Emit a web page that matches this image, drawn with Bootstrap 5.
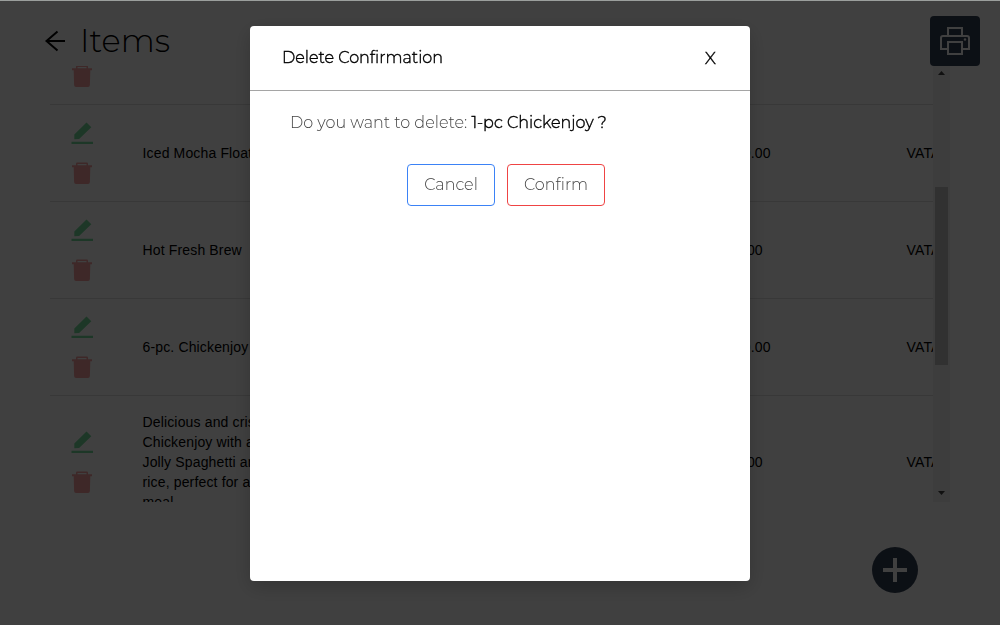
<!DOCTYPE html>
<html lang="en">
<head>
<meta charset="utf-8">
<meta name="viewport" content="width=device-width, initial-scale=1">
<title>Items</title>
<link href="https://cdn.jsdelivr.net/npm/bootstrap@5.3.0/dist/css/bootstrap.min.css" rel="stylesheet">
<style>
  html, body { height: 100%; overflow: hidden; }
  body { font-family: Montserrat, Inter, "Open Sans", sans-serif; color: #000; background: #fff; }
  .page-head { height: 66px; padding: 16px 20px 0 42px; }
  .page-title { font-size: 32px; font-weight: 300; line-height: 50px; margin: 0 0 0 12px; }
  .back-arrow { width: 26px; height: 50px; }
  .print-btn { width: 50px; height: 50px; background: #334155; border-radius: 4px; }
  .item-table { height: 436px; margin: 0 50px; }
  .item-rows { font: 14px/20px "Liberation Sans", Arial, sans-serif; letter-spacing: .15px; }
  .item-row { height: 97px; border-bottom: 1px solid #e0e0e0; padding-left: 20px; }
  .item-row.first-row { height: 39px; }
  .item-row.tall-row { height: 133px; }
  .cell-actions { width: 72.5px; gap: 16px; }
  .cell-actions:not(.first-cell) { margin-top: -2px; }
  .cell-actions svg { width: 24px; height: 24px; opacity: .5; display: block; }
  .cell-actions svg.pen-icon { opacity: .62; }
  .first-cell svg { margin-top: -3px; }
  .cell-name { width: 140px; }
  .cell-price { width: 179.5px; margin-left: 444.5px; }
  .sb-track { width: 17px; background: #f1f1f1; padding: 5px 0 7px; }
  .sb-thumb { width: 13px; height: 178px; margin-top: 112px; background: #c1c1c1; }
  .sb-arrow { width: 7px; height: 4px; display: block; }
  .add-btn { width: 46px; height: 46px; background: #334155; margin: 45px 82px 0 auto; }
  .shade { background: rgba(0,0,0,.75); border-top: 1px solid #9b9f9d; z-index: 1055; padding-top: 25px; }
  .dialog-box { width: 500px; height: 555px; border-radius: 4px; box-shadow: 0 6px 20px rgba(0,0,0,.2); }
  .dialog-head { height: 65px; border-bottom: 1px solid #a5a5a5; padding: 0 34px 0 32px; }
  .dialog-title { font-size: 16px; font-weight: 300; line-height: 24px; margin: 0; }
  .close-x { font-size: 17.5px; line-height: 24px; font-weight: 300; }
  .dialog-title, .close-x, .dialog-text b { -webkit-text-stroke: .4px #000; }
  .dialog-text { font-size: 16px; font-weight: 300; line-height: 24px; margin: 20px 0 29px 40px; color: #444; }
  .dialog-text b { font-weight: 300; color: #000; }
  .dlg-btn { height: 42px; padding: 0; border: 1px solid; border-radius: 4px; font-size: 16px; font-weight: 300; color: #444; background: #fff; }
  .dlg-cancel { width: 88px; border-color: #3b82f6; }
  .dlg-confirm { width: 98px; border-color: #ef4444; }
  .dlg-actions { gap: 12px; padding-left: 12px; }
</style>
</head>
<body>
<svg class="d-none">
  <symbol id="pen" viewBox="0 0 24 24"><path fill="#22c55e" d="M4.300 14.600 16.500 2.400 21.300 7.200 9.100 18.900 4.300 19.300zM1.500 21.800h21.500v2.200H1.500z"/></symbol>
  <symbol id="bin" viewBox="0 0 24 24"><path fill="#ef4444" fill-rule="evenodd" d="M6 5.300V3.700Q6 2.500 7.200 2.500H16.800Q18 2.500 18 3.700V5.300H22V7.300H20.300L19.900 21.900Q19.800 23.900 18 23.900H6Q4.200 23.900 4.100 21.900L3.700 7.300H2V5.300zM7.500 4V5.300H16.500V4z"/></symbol>
</svg>

<header class="page-head d-flex align-items-start">
  <svg class="back-arrow" viewBox="0 0 26 50" fill="none" stroke="#000" stroke-width="2"><path d="M23 25H4.500M15.500 15.500 4.500 25 15.500 34.500"/></svg>
  <h1 class="page-title">Items</h1>
  <button class="print-btn btn p-0 border-0 ms-auto d-flex align-items-center justify-content-center" aria-label="Print">
    <svg width="32" height="32" viewBox="0 0 32 32" fill="none" stroke="#fff" stroke-width="2"><path d="M9 10V3H23V10M9 24H2V13Q2 11 4 11H28Q30 11 30 13V24H23M9 17H23V29H9z"/><circle cx="26" cy="14.500" r="1.200" fill="#fff" stroke="none"/></svg>
  </button>
</header>

<main>
  <div class="item-table d-flex overflow-hidden">
    <div class="item-rows flex-grow-1 overflow-hidden">
      <div class="item-row first-row d-flex">
        <div class="cell-actions first-cell"><svg><use href="#bin"/></svg></div>
      </div>
      <div class="item-row d-flex align-items-center">
        <div class="cell-actions d-flex flex-column flex-shrink-0"><svg class="pen-icon"><use href="#pen"/></svg><svg><use href="#bin"/></svg></div>
        <div class="cell-name flex-shrink-0">Iced Mocha Float</div><div class="cell-price flex-shrink-0">109.00</div><div>VATABLE</div>
      </div>
      <div class="item-row d-flex align-items-center">
        <div class="cell-actions d-flex flex-column flex-shrink-0"><svg class="pen-icon"><use href="#pen"/></svg><svg><use href="#bin"/></svg></div>
        <div class="cell-name flex-shrink-0">Hot Fresh Brew</div><div class="cell-price flex-shrink-0">59.00</div><div>VATABLE</div>
      </div>
      <div class="item-row d-flex align-items-center">
        <div class="cell-actions d-flex flex-column flex-shrink-0"><svg class="pen-icon"><use href="#pen"/></svg><svg><use href="#bin"/></svg></div>
        <div class="cell-name flex-shrink-0">6-pc. Chickenjoy</div><div class="cell-price flex-shrink-0">449.00</div><div>VATABLE</div>
      </div>
      <div class="item-row tall-row d-flex align-items-center">
        <div class="cell-actions d-flex flex-column flex-shrink-0"><svg class="pen-icon"><use href="#pen"/></svg><svg><use href="#bin"/></svg></div>
        <div class="cell-name flex-shrink-0">Delicious and crispy<br>Chickenjoy with a<br>Jolly Spaghetti and<br>rice, perfect for a<br>meal</div><div class="cell-price flex-shrink-0">99.00</div><div>VATABLE</div>
      </div>
    </div>
    <div class="sb-track d-flex flex-column align-items-center flex-shrink-0">
      <svg class="sb-arrow flex-shrink-0" viewBox="0 0 7 4"><path d="M0 4 3.500 0 7 4z" fill="#404040"/></svg>
      <div class="sb-thumb flex-shrink-0"></div>
      <svg class="sb-arrow mt-auto flex-shrink-0" viewBox="0 0 7 4"><path d="M0 0H7L3.500 4z" fill="#404040"/></svg>
    </div>
  </div>
  <button class="add-btn btn rounded-circle p-0 border-0 d-flex align-items-center justify-content-center" aria-label="Add">
    <svg width="24" height="24" viewBox="0 0 24 24"><path d="M10 0h4v10h10v4H14v10h-4V14H0v-4h10z" fill="#fff"/></svg>
  </button>
</main>

<div class="shade position-fixed top-0 start-0 w-100 h-100">
  <section class="dialog-box bg-white mx-auto" role="dialog">
    <div class="dialog-head d-flex align-items-center justify-content-between">
      <h2 class="dialog-title">Delete Confirmation</h2>
      <span class="close-x">X</span>
    </div>
    <p class="dialog-text">Do you want to delete: <b>1-pc Chickenjoy ?</b></p>
    <div class="dlg-actions d-flex justify-content-center">
      <button class="dlg-btn dlg-cancel">Cancel</button>
      <button class="dlg-btn dlg-confirm">Confirm</button>
    </div>
  </section>
</div>
<script src="https://cdn.jsdelivr.net/npm/bootstrap@5.3.0/dist/js/bootstrap.bundle.min.js"></script>
</body>
</html>
